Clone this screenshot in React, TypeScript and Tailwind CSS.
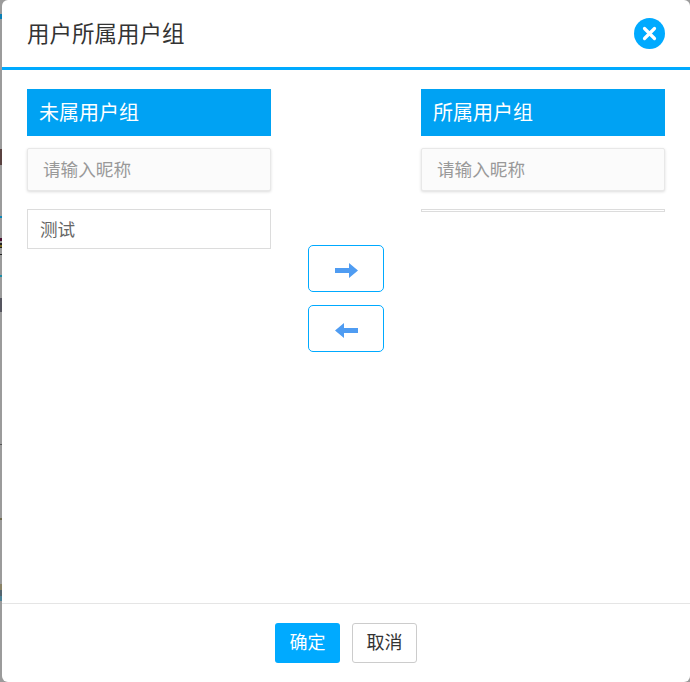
const FONT = "font-['Liberation_Sans','Noto_Sans_CJK_SC',sans-serif]";

// page behind the dimmed overlay, only a 2px sliver of it shows
const backdropBits = [
  { top: 14, height: 5, color: '#0a7fb5' },
  { top: 149, height: 16, color: '#5a4240' },
  { top: 216, height: 2, color: '#0a86b8' },
  { top: 238, height: 3, color: '#4a1030' },
  { top: 243, height: 2, color: '#222' },
  { top: 245, height: 2, color: '#7a6a20' },
  { top: 247, height: 1, color: '#222' },
  { top: 254, height: 1, color: '#222' },
  { top: 275, height: 2, color: '#1b8fa8' },
  { top: 298, height: 14, color: '#55555f' },
  { top: 444, height: 1, color: '#555' },
  { top: 518, height: 2, color: '#6f6a50' },
  { top: 584, height: 6, color: '#8a8266' },
  { top: 590, height: 6, color: '#54656f' },
  { top: 596, height: 5, color: '#4c8196' },
];

function Arrow({ flip }: { flip?: boolean }) {
  return (
    <svg className={flip ? 'rotate-180' : ''} width="23" height="15" viewBox="0 0 23 15" fill="#4f9cf2">
      <path d="M0 5h14V0l9 7.500-9 7.500v-5H0z" />
    </svg>
  );
}

function GroupColumn({ title, items }: { title: string; items: string[] }) {
  return (
    <div className="flex w-[244px] shrink-0 flex-col">
      <div className="flex h-[47px] items-center bg-[#00a2f3] pl-3 text-[20px] text-white">{title}</div>
      <input
        className="mt-3 h-[43px] w-full rounded-[2px] border border-[#e8e8e8] bg-[#fbfbfb] pl-[15px] pt-[2px] text-[17.600px] shadow-[0_1px_3px_rgba(0,0,0,0.14)] outline-none placeholder:text-[#999]"
        placeholder="请输入昵称"
        readOnly
      />
      <ul className="mt-[18px] min-h-[3px] border border-[#dcdcdc]">
        {items.map((item) => (
          <li className="flex h-[38px] items-center pl-3 pt-[2px] text-[17.600px] text-[#666]" key={item}>
            {item}
          </li>
        ))}
      </ul>
    </div>
  );
}

export default function App() {
  return (
    <div className={`relative h-[682px] w-[690px] overflow-hidden bg-[#9b9b9b] pl-[2px] ${FONT}`}>
      {backdropBits.map((bit) => (
        <span
          className="absolute left-0 w-[2px]"
          key={bit.top}
          style={{ top: bit.top, height: bit.height, backgroundColor: bit.color }}
        />
      ))}
      <div className="flex h-full flex-col rounded-[6px] bg-white">
        <header className="flex h-[70px] shrink-0 items-center justify-between border-b-[3px] border-[#00aaff] pl-[25px] pr-[25px]">
          <h1 className="pt-[3px] text-[22.500px] font-normal text-[#333]">用户所属用户组</h1>
          <button className="grid size-[31px] place-items-center rounded-full bg-[#00aaff]" type="button">
            <svg width="15" height="15" viewBox="0 0 15 15" stroke="#fff" strokeWidth="3.200" strokeLinecap="round">
              <path d="M2.500 2.500l10 10M12.500 2.500l-10 10" />
            </svg>
          </button>
        </header>

        <main className="flex flex-1 items-start pl-[25px] pt-[19px]">
          <GroupColumn title="未属用户组" items={['测试']} />
          <div className="flex w-[150px] shrink-0 flex-col items-center gap-[13px] pt-[156px]">
            <button className="grid h-[47px] w-[76px] place-items-center rounded-[5px] border border-[#00aaff] bg-white pt-1" type="button">
              <Arrow />
            </button>
            <button className="grid h-[47px] w-[76px] place-items-center rounded-[5px] border border-[#00aaff] bg-white pt-1" type="button">
              <Arrow flip />
            </button>
          </div>
          <GroupColumn title="所属用户组" items={[]} />
        </main>

        <footer className="flex h-[79px] shrink-0 items-start justify-center gap-3 border-t border-[#e5e5e5] pt-[19px]">
          <button className="h-10 w-[65px] rounded-[3px] bg-[#00aaff] text-[18px] text-white" type="button">确定</button>
          <button className="h-10 w-[65px] rounded-[3px] border border-[#ccc] bg-white text-[18px] text-[#333]" type="button">取消</button>
        </footer>
      </div>
    </div>
  );
}
